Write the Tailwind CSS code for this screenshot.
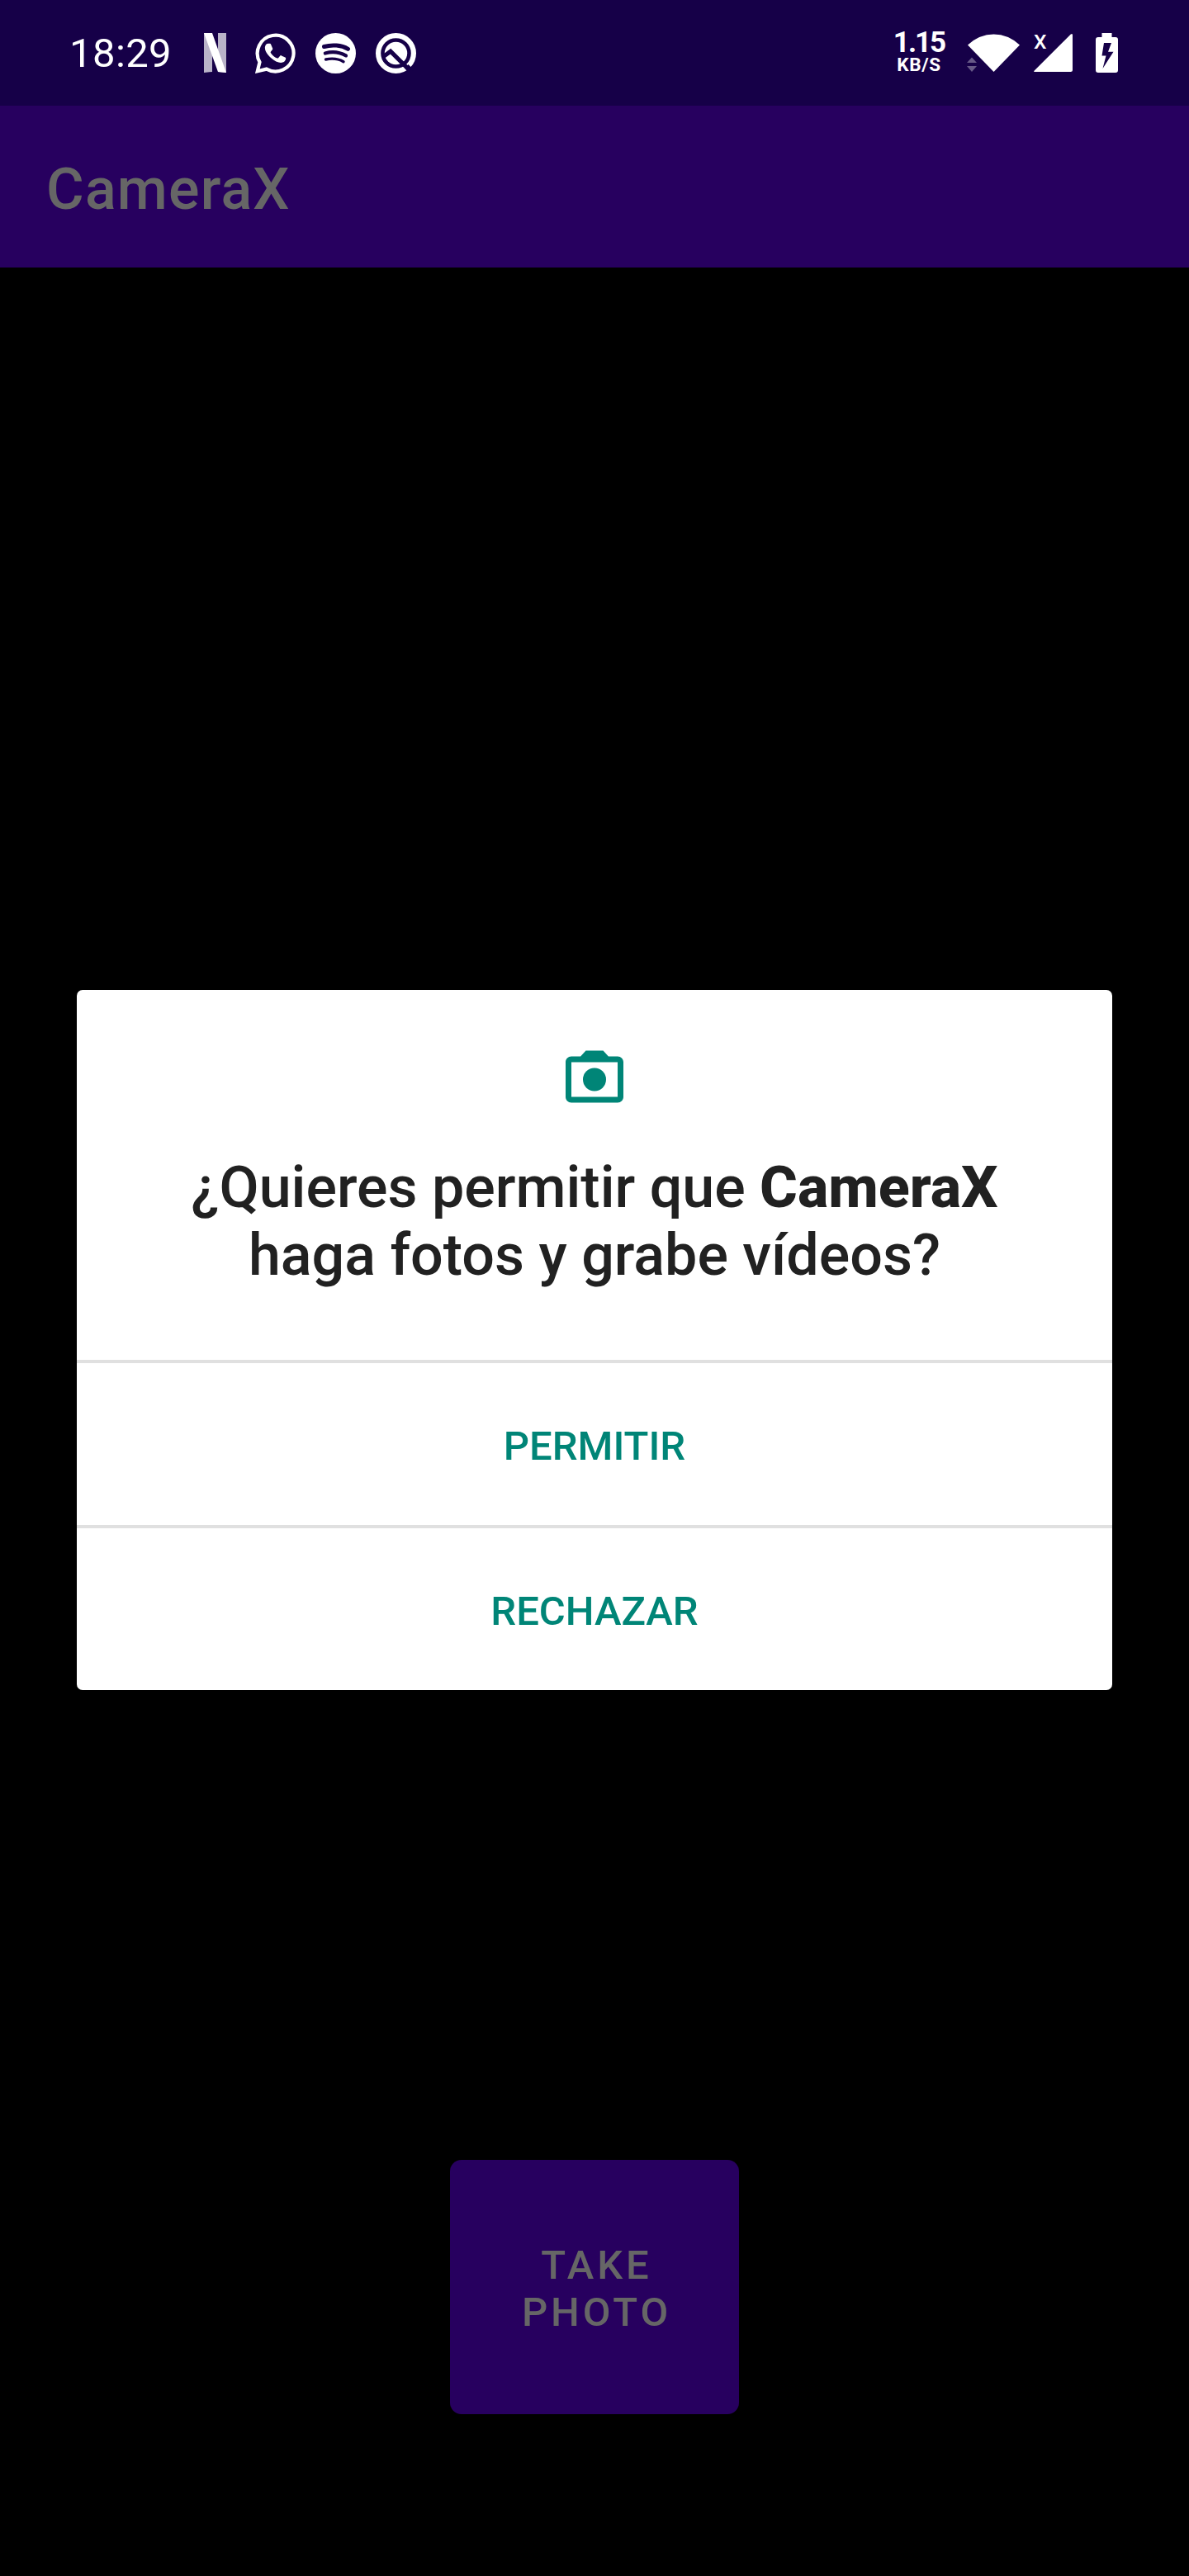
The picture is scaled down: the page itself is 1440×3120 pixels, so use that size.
<!DOCTYPE html>
<html lang="es">
<head>
<meta charset="utf-8">
<title>CameraX</title>
<script src="https://cdn.jsdelivr.net/npm/@tailwindcss/browser@4"></script>
</head>
<body class="bg-black font-['Roboto',sans-serif]">
<div class="relative flex h-[3120px] w-[1440px] flex-col overflow-hidden bg-black">
  <!-- Status bar -->
  <header class="flex h-[128px] shrink-0 items-center bg-[#160048] pl-[84px] pr-[86px] text-white">
    <span class="w-[163px] text-[49px] leading-none tracking-[0.4px]">18:29</span>
    <svg class="h-12 w-[27px]" viewBox="0 0 27 48" fill="#fff">
      <path opacity=".7" d="M0 0h10v47L0 48zM17 0h10v48l-10-1z"/>
      <path d="M0 0h10l17 48-10-1z"/>
    </svg>
    <svg class="ml-[35px] h-[49px] w-[49px]" viewBox="0 0 49 49" fill="none">
      <path d="M2.800 46.200 5.500 35.200A21.900 21.900 0 1 1 13.800 43.600Z" stroke="#fff" stroke-width="4.200"/>
      <path transform="translate(.3 .3) scale(.95)" fill="#fff" d="M16 13h2.200c1 0 1.300.4 1.700 1.300l2 4.800c.3.800.1 1.300-.3 1.900l-1.900 2.400c-.5.6-.4 1 0 1.700 2 3.300 4.600 5.200 8 6.600.8.3 1.200.2 1.700-.4l2-2.500c.5-.7 1-.7 1.800-.3l4.700 2.300c.8.4 1 .7.9 1.600-.4 3.400-3.200 5.100-6.300 5.100-3.600 0-8.400-2.100-12.800-6.300C15.300 27 12.200 22.600 12.200 18.500c0-2.500 1.400-5.500 3.800-5.500Z"/>
    </svg>
    <svg class="ml-6 h-[49px] w-[49px]" viewBox="0 0 49 49" fill="none" stroke="#160048" stroke-linecap="round">
      <circle cx="24.500" cy="24.500" r="24.500" fill="#fff" stroke="none"/>
      <path stroke-width="5" d="M10.500 16.500C20 13.700 31.500 14.500 39.500 19.300"/>
      <path stroke-width="4.200" d="M11.800 24.500C20 22.200 29.500 23.200 37 27.400"/>
      <path stroke-width="3.400" d="M12.500 32C20 30.400 27.500 31 34 34.700"/>
    </svg>
    <svg class="ml-6 h-[49px] w-[49px]" viewBox="0 0 49 49" fill="none">
      <circle cx="24.500" cy="24.500" r="21.400" stroke="#fff" stroke-width="6.200"/>
      <circle cx="24.500" cy="24.500" r="13.700" fill="#fff"/>
      <path d="M9.500 28.500 18 22.200 43.500 47.500" stroke="#160048" stroke-width="5.200"/>
      <path d="m35 42.500 4.500-4.500 4.500 4.500-4.500 5z" fill="#160048"/>
    </svg>
    <div class="ml-auto flex items-center">
      <div class="flex w-[66px] flex-col items-center pb-[3px] font-bold">
        <span class="text-[35px] leading-[32px] tracking-[-2px]">1.15</span>
        <span class="text-[22.500px] leading-[21px] tracking-[0.7px]">KB/S</span>
      </div>
      <svg class="ml-[24px] h-12 w-[66px]" viewBox="0 0 66 48" fill="#fff">
        <path d="M2 14.500Q16 1.500 33.500 1.500T65 14.500L33.500 47Z"/>
        <path opacity=".35" d="M1 36 7 29.500 13 36zM1 40h12l-6 7z"/>
      </svg>
      <div class="relative ml-[16px] h-12 w-12">
        <svg class="h-12 w-12" viewBox="0 0 48 48" fill="#fff"><path d="M.8 47Q-.4 47 .5 45.800L44.800 1.500Q47 0 47 2.500V44.500Q47 47 44.500 47Z"/></svg>
        <span class="absolute left-0 top-[-1px] text-[24.500px] font-medium leading-6">X</span>
      </div>
      <svg class="ml-[27px] h-12 w-[27px]" viewBox="0 0 27 48">
        <path fill="#fff" fill-rule="evenodd" d="M7.500 0h12v5H24q3 0 3 3v37q0 3-3 3H3q-3 0-3-3V8q0-3 3-3h4.500zM10 12 7.500 27.500h5L8.500 43 21.500 22.800H15L19 12z"/>
      </svg>
    </div>
  </header>

  <!-- App bar -->
  <div class="flex h-[196px] shrink-0 items-center bg-[#27005f] pl-14 pt-[6px]">
    <h1 class="text-[70px] font-medium leading-[82px] tracking-[1.2px] text-[#666666]">CameraX</h1>
  </div>

  <!-- Camera preview with shutter button -->
  <main class="flex flex-1 flex-col items-center justify-end pb-[196px]">
    <button class="flex h-[308px] w-[350px] items-center justify-center rounded-[14px] bg-[#27005f] pl-[5px] pt-1 text-center text-[49px] font-medium leading-[57px] tracking-[3.900px] text-[#666666]">TAKE<br>PHOTO</button>
  </main>

  <!-- Permission dialog -->
  <section class="absolute left-[93px] top-[1199px] flex h-[848px] w-[1254px] flex-col overflow-hidden rounded-[7px] bg-white">
    <div class="flex flex-1 flex-col items-center pt-[63px]">
      <svg class="h-[84px] w-[84px]" viewBox="0 0 24 24" fill="#008577">
        <path fill-rule="evenodd" d="M20 5h-3.170L15 3H9L7.170 5H4c-1.100 0-2 .9-2 2v12c0 1.100.9 2 2 2h16c1.100 0 2-.9 2-2V7c0-1.100-.9-2-2-2Zm0 14H4V7h16z"/>
        <circle cx="12" cy="13" r="4"/>
      </svg>
      <p class="mt-[51px] text-center text-[70px] font-medium leading-[82px] text-[#212121]">¿Quieres permitir que <b class="font-extrabold">CameraX</b><br>haga fotos y grabe vídeos?</p>
    </div>
    <button class="h-[200px] border-t-4 border-[#e0e0e0] pt-[5px] text-[49px] font-medium text-[#008577]">PERMITIR</button>
    <button class="h-[200px] border-t-4 border-[#e0e0e0] pt-[5px] text-[49px] font-medium text-[#008577]">RECHAZAR</button>
  </section>
</div>
</body>
</html>
